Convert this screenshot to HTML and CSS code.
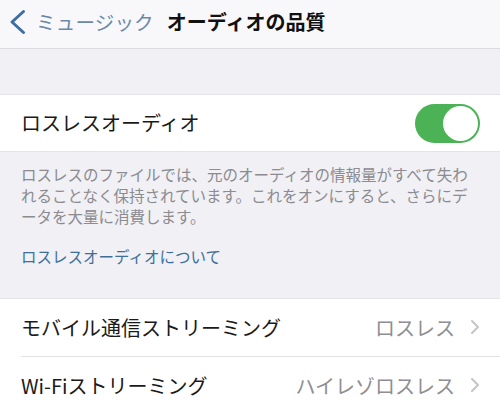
FILE: index.html
```html
<!DOCTYPE html>
<html lang="ja">
<head>
<meta charset="utf-8">
<link rel="stylesheet" href="styles.css">
</head>
<body>
<div class="screen">
  <header class="nav">
    <svg class="chev" width="17" height="26" viewBox="0 0 17 26"><path d="M14.5 2.5 L3 13 L14.5 23.5" fill="none" stroke="#3c6ea6" stroke-width="3" stroke-linecap="round" stroke-linejoin="round"/></svg>
    <span class="back">ミュージック</span>
    <span class="title">オーディオの品質</span>
  </header>
  <div class="spacer"></div>
  <div class="group">
    <div class="row">
      <span class="label">ロスレスオーディオ</span>
      <span class="toggle"><span class="knob"></span></span>
    </div>
  </div>
  <div class="footer">
    <p class="desc">ロスレスのファイルでは、元のオーディオの情報量がすべて失われることなく保持されています。これをオンにすると、さらにデータを大量に消費します。</p>
    <p class="link">ロスレスオーディオについて</p>
  </div>
  <div class="group">
    <div class="row sep">
      <span class="label">モバイル通信ストリーミング</span>
      <span class="value">ロスレス<svg class="arrow" width="10" height="16" viewBox="0 0 10 16"><path d="M2 2 L8 8 L2 14" fill="none" stroke="#c5c5c9" stroke-width="2" stroke-linecap="round" stroke-linejoin="round"/></svg></span>
    </div>
    <div class="row">
      <span class="label">Wi-Fiストリーミング</span>
      <span class="value">ハイレゾロスレス<svg class="arrow" width="10" height="16" viewBox="0 0 10 16"><path d="M2 2 L8 8 L2 14" fill="none" stroke="#c5c5c9" stroke-width="2" stroke-linecap="round" stroke-linejoin="round"/></svg></span>
    </div>
  </div>
</div>
</body>
</html>
```
FILE: styles.css
```css
* { box-sizing: border-box; }
html, body { margin: 0; padding: 0; }
body {
  width: 500px;
  height: 410px;
  overflow: hidden;
  background: #f0f0f5;
  font-family: "Noto Sans CJK JP", "Noto Sans", sans-serif;
}
.screen { width: 500px; }
.nav {
  height: 49px;
  background: #f8f8fa;
  border-bottom: 1px solid #dcdce0;
  display: flex;
  align-items: center;
  padding-left: 9px;
}
.chev { display: block; margin-top: -5px; }
.back {
  margin-left: 10px;
  font-size: 19.5px;
  color: #6a88a8;
  letter-spacing: 0.2px;
  margin-top: -5px;
}
.title {
  margin-left: 13px;
  font-size: 20px;
  font-weight: 700;
  color: #111;
  margin-top: -5px;
}
.spacer { height: 45px; }
.group {
  background: #fff;
  border-top: 1px solid #e4e4e8;
  border-bottom: 1px solid #e4e4e8;
}
.row {
  display: flex;
  align-items: center;
  justify-content: space-between;
  height: 56px;
  padding: 0 20px 0 21px;
  position: relative;
}
.group + .footer + .group .row { height: 58px; }
.row.sep::after {
  content: "";
  position: absolute;
  left: 21px;
  right: 0;
  bottom: 0;
  height: 1px;
  background: #e2e2e6;
}
.label {
  font-size: 20px;
  color: #1a1a1a;
  margin-top: -2px;
}
.toggle {
  width: 65px;
  height: 39px;
  border-radius: 20px;
  background: #4bb356;
  display: flex;
  align-items: center;
  justify-content: flex-end;
  padding-right: 2px;
}
.knob {
  width: 35px;
  height: 35px;
  border-radius: 50%;
  background: #fff;
}
.footer {
  padding: 12px 24px 31px 21px;
}
.desc {
  margin: 0;
  font-size: 15.5px;
  line-height: 21px;
  color: #8b8b90;
}
.link {
  margin: 19px 0 0;
  font-size: 15.5px;
  line-height: 21px;
  color: #3f6f98;
}
.value {
  display: flex;
  align-items: center;
  font-size: 20px;
  color: #8e8e93;
  margin-top: -2px;
}
.arrow { margin-left: 15px; display: block; }
```
